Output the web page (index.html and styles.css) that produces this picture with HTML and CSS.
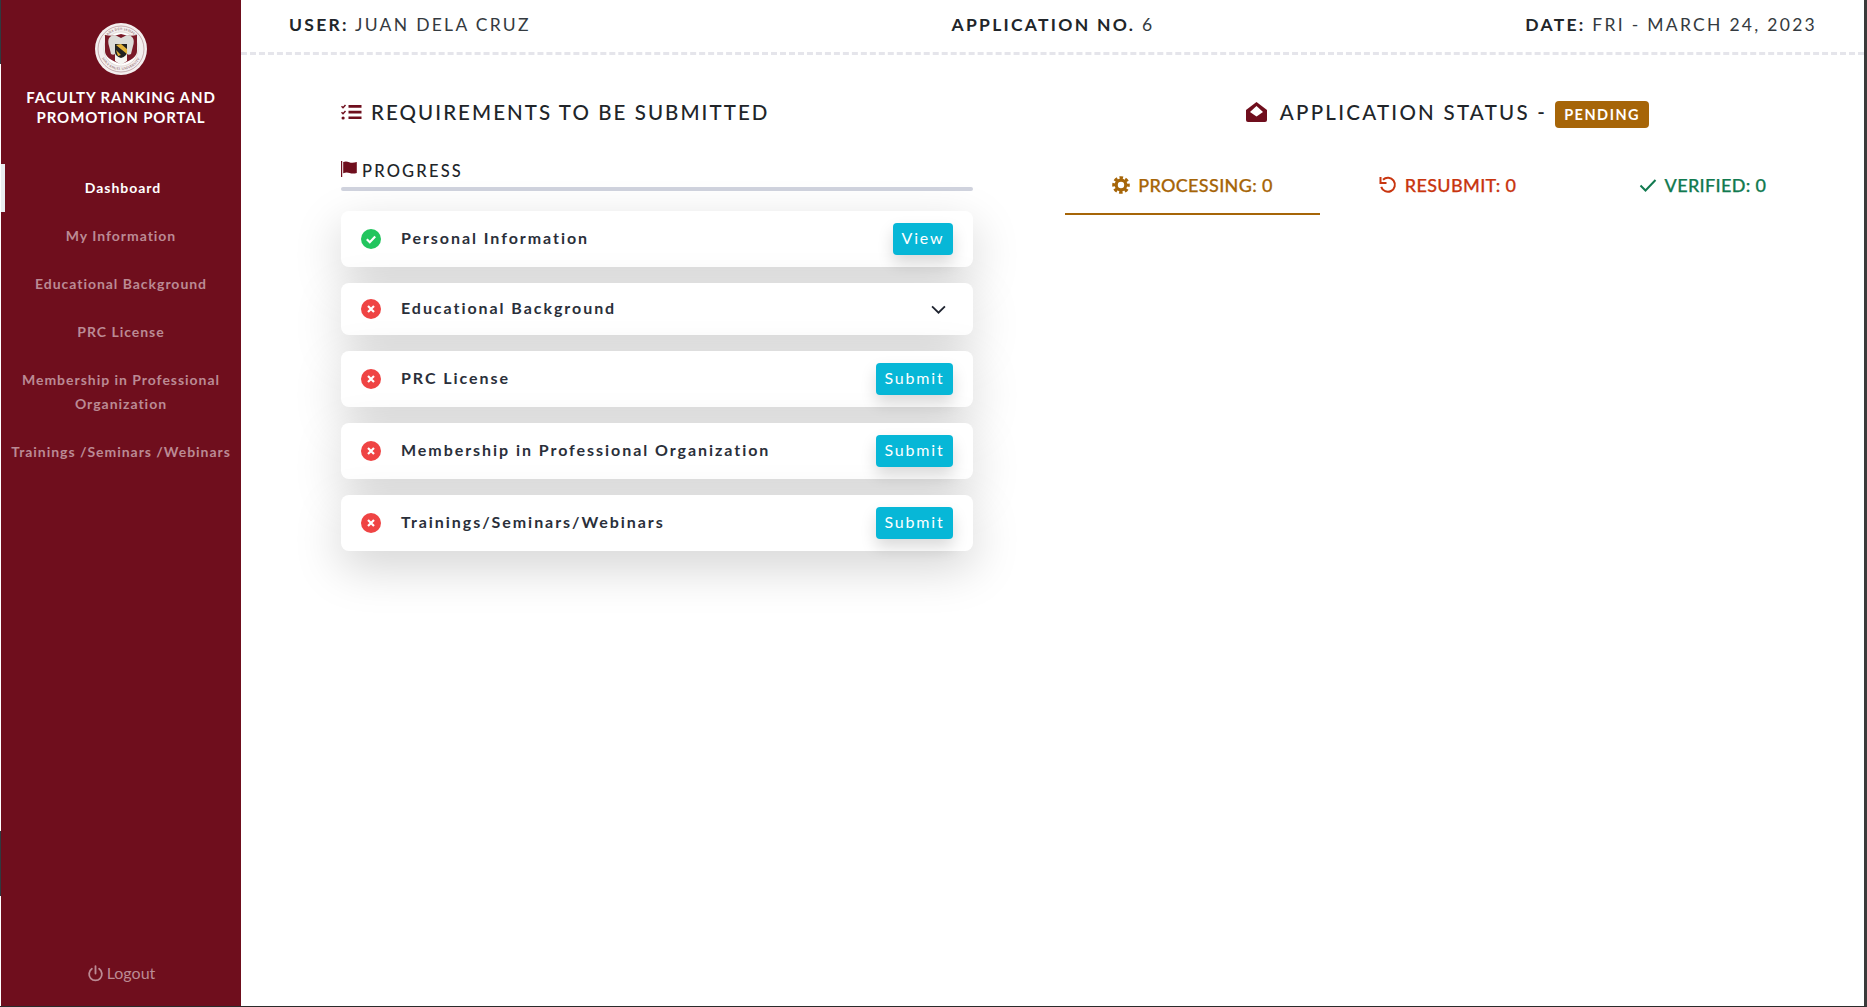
FILE: index.html
```html
<!DOCTYPE html>
<html lang="en">
<head>
<meta charset="utf-8">
<title>Faculty Ranking and Promotion Portal</title>
<link rel="stylesheet" href="styles.css">
</head>
<body>
<div class="app">
  <aside class="sidebar">
    <div class="brand">
      <svg class="crest" viewBox="0 0 52 52" aria-hidden="true">
        <defs>
          <path id="arcTop" d="M7 26a19 19 0 0 1 38 0"/>
          <path id="arcBot" d="M5 26a21 21 0 0 0 42 0"/>
        </defs>
        <circle cx="26" cy="26" r="26" fill="#f4efef"/>
        <circle cx="26" cy="26" r="23" fill="none" stroke="#9a6a70" stroke-width=".5"/>
        <circle cx="26" cy="26" r="17" fill="#fff" stroke="#a98" stroke-width=".3"/>
        <text class="crest-text"><textPath href="#arcTop" startOffset="50%" text-anchor="middle">SANA DEO SEMPER</textPath></text>
        <text class="crest-text"><textPath href="#arcBot" startOffset="50%" text-anchor="middle">HOLY ANGEL UNIVERSITY</textPath></text>
        <path d="M10 12q8 2 16 -1q8 3 16 1v16q0 8 -16 13q-16 -5 -16 -13z" fill="#7a1a28"/>
        <path d="M14 23q-3 -10 6 -11l6 3 6 -3q9 1 6 11l-2 8q-3 2 -5 -1H21q-2 3 -5 1z" fill="#dcdcd8"/>
        <path d="M20 24h12v14l-6 4 -6 -4z" fill="#f5f5f2"/>
        <path d="M20 21h12v8q0 4 -6 6q-6 -2 -6 -6z" fill="#222"/>
        <path d="M21 22l11 9v-5l-6 -5zM21 27l5 5 -3 1z" fill="#e2b33a"/>
      </svg>
      <h1 class="brand-title">FACULTY RANKING AND PROMOTION PORTAL</h1>
    </div>
    <nav class="nav">
      <a class="nav-item active">Dashboard</a>
      <a class="nav-item">My Information</a>
      <a class="nav-item">Educational Background</a>
      <a class="nav-item">PRC License</a>
      <a class="nav-item">Membership in Professional Organization</a>
      <a class="nav-item">Trainings /Seminars /Webinars</a>
    </nav>
    <a class="logout">
      <svg class="logout-icon" viewBox="0 0 16 16" aria-hidden="true"><path d="M4.6 3.6a6 6 0 1 0 6.8 0" fill="none" stroke="currentColor" stroke-width="1.7" stroke-linecap="round"/><path d="M8 1v7" fill="none" stroke="currentColor" stroke-width="1.7" stroke-linecap="round"/></svg>
      Logout
    </a>
  </aside>

  <div class="content">
    <header class="topbar">
      <div class="top-left"><b>USER:</b> JUAN DELA CRUZ</div>
      <div class="top-center"><b>APPLICATION NO.</b> 6</div>
      <div class="top-right"><b>DATE:</b> FRI - MARCH 24, 2023</div>
    </header>

    <main class="columns">
      <section class="col-left">
        <h2 class="section-title">
          <svg class="title-icon" viewBox="0.5 0 21 16" aria-hidden="true"><path d="M1 2.2l1.5 1.5L5 1M1 8.2l1.5 1.5L5 7" fill="none" stroke="#6f0e1d" stroke-width="1.5"/><circle cx="2.6" cy="14" r="1.6" fill="#6f0e1d"/><path d="M8 1h13v2.7H8zM8 6.7h13v2.7H8zM8 12.4h13v2.7H8z" fill="#6f0e1d"/></svg>
          REQUIREMENTS TO BE SUBMITTED
        </h2>
        <div class="progress-label">
          <svg class="flag-icon" viewBox="0 0 16 16" aria-hidden="true"><path d="M0 0h1.2v16H0z" fill="#6f0e1d"/><path d="M2.2 1q3 -1 6 .2t7.6 -.2v11q-4 1 -7.2 0t-6.4 .2z" fill="#6f0e1d"/></svg>
          PROGRESS
        </div>
        <div class="progress-rule"></div>
        <ul class="req-list">
          <li class="req">
            <svg class="st-icon" viewBox="0 0 20 20" aria-hidden="true"><circle cx="10" cy="10" r="10" fill="#22c55e"/><path d="M5.8 10.2l3 3 5.4 -5.6" fill="none" stroke="#fff" stroke-width="2.2"/></svg>
            <span class="req-name">Personal Information</span>
            <a class="btn btn-view">View</a>
          </li>
          <li class="req req-short">
            <svg class="st-icon" viewBox="0 0 20 20" aria-hidden="true"><circle cx="10" cy="10" r="10" fill="#ef4444"/><path d="M7 7l6 6M13 7l-6 6" fill="none" stroke="#fff" stroke-width="2.2"/></svg>
            <span class="req-name">Educational Background</span>
            <svg class="chev" viewBox="0 0 14 8" aria-hidden="true"><path d="M1 1l6 6 6 -6" fill="none" stroke="#1f2430" stroke-width="1.7"/></svg>
          </li>
          <li class="req">
            <svg class="st-icon" viewBox="0 0 20 20" aria-hidden="true"><circle cx="10" cy="10" r="10" fill="#ef4444"/><path d="M7 7l6 6M13 7l-6 6" fill="none" stroke="#fff" stroke-width="2.2"/></svg>
            <span class="req-name">PRC License</span>
            <a class="btn">Submit</a>
          </li>
          <li class="req">
            <svg class="st-icon" viewBox="0 0 20 20" aria-hidden="true"><circle cx="10" cy="10" r="10" fill="#ef4444"/><path d="M7 7l6 6M13 7l-6 6" fill="none" stroke="#fff" stroke-width="2.2"/></svg>
            <span class="req-name">Membership in Professional Organization</span>
            <a class="btn">Submit</a>
          </li>
          <li class="req">
            <svg class="st-icon" viewBox="0 0 20 20" aria-hidden="true"><circle cx="10" cy="10" r="10" fill="#ef4444"/><path d="M7 7l6 6M13 7l-6 6" fill="none" stroke="#fff" stroke-width="2.2"/></svg>
            <span class="req-name">Trainings/Seminars/Webinars</span>
            <a class="btn">Submit</a>
          </li>
        </ul>
      </section>

      <section class="col-right">
        <h2 class="section-title status-title">
          <svg class="env-icon" viewBox="0 0 21 20" aria-hidden="true"><path d="M10.5 0L21 8v10a2 2 0 0 1 -2 2H2a2 2 0 0 1 -2 -2V8z" fill="#6f0e1d"/><path d="M10.5 4l6.5 6 -6.5 4.6L4 10z" fill="#fff"/></svg>
          APPLICATION STATUS -
          <span class="badge">PENDING</span>
        </h2>
        <div class="tabs">
          <div class="tab tab-processing">
            <svg class="tab-icon" viewBox="0 0 18 18" aria-hidden="true"><circle cx="9" cy="9" r="7" fill="none" stroke="currentColor" stroke-width="3.6" stroke-dasharray="3.3 2.2" stroke-dashoffset="1.6"/><circle cx="9" cy="9" r="4.8" fill="none" stroke="currentColor" stroke-width="3.2"/></svg>
            PROCESSING: 0
          </div>
          <div class="tab tab-resubmit">
            <svg class="tab-icon" viewBox="0 0 18 18" aria-hidden="true"><path d="M4 3.7a7 7 0 1 1 -1.8 7.2" fill="none" stroke="currentColor" stroke-width="2"/><path d="M1.5 1v6h6" fill="none" stroke="currentColor" stroke-width="2"/></svg>
            RESUBMIT: 0
          </div>
          <div class="tab tab-verified">
            <svg class="tab-icon" viewBox="0 0 18 18" aria-hidden="true"><path d="M1.5 9.5l5 5L16.5 4" fill="none" stroke="currentColor" stroke-width="2"/></svg>
            VERIFIED: 0
          </div>
        </div>
      </section>
    </main>
  </div>
</div>
</body>
</html>
```

FILE: styles.css
```css
* { box-sizing: border-box; }
html, body { margin: 0; padding: 0; height: 100%; overflow: hidden; background: #fff; }
body { font-family: "Lato", "Noto Sans", sans-serif; color: #212529; }

.app {
  display: flex;
  height: 1007px;
  padding-left: 1px;
  border-right: 3px solid #3a3a3a;
  border-bottom: 1px solid #2b2b2b;
  background-image: linear-gradient(#2f3a40, #2f3a40), linear-gradient(#2f3a40, #2f3a40);
  background-repeat: no-repeat;
  background-size: 1px 64px, 1px 65px;
  background-position: 0 0, 0 831px;
}

/* Sidebar */
.sidebar {
  width: 240px;
  flex: none;
  background: #6f0e1d;
  display: flex;
  flex-direction: column;
  align-items: stretch;
}
.brand { padding-top: 23px; display: flex; flex-direction: column; align-items: center; }
.crest { width: 52px; height: 52px; display: block; }
.crest-text { font-family: "Liberation Serif", serif; font-size: 3.4px; fill: #6f3a40; letter-spacing: .2px; }
.brand-title {
  margin: 12px 0 0;
  padding: 0 20px;
  color: #fff;
  font-size: 15px;
  font-weight: 700;
  line-height: 20px;
  letter-spacing: .9px;
  text-align: center;
}
.nav { margin-top: 37px; display: flex; flex-direction: column; }
.nav-item {
  display: block;
  padding: 12px 8px;
  color: #bb8a94;
  font-size: 14px;
  font-weight: 700;
  line-height: 24px;
  letter-spacing: .97px;
  text-align: center;
}
.nav-item.active { color: #fff; border-left: 4px solid #e9ecef; }
.logout {
  margin-top: auto;
  margin-bottom: 21px;
  display: flex;
  align-items: center;
  justify-content: center;
  gap: 3px;
  color: #bb8a94;
  font-size: 16px;
  line-height: 24px;
}
.logout-icon { width: 17px; height: 17px; }

/* Main */
.content { flex: 1; min-width: 0; display: flex; flex-direction: column; }
.topbar {
  height: 55px;
  padding: 0 47px 3px 48px;
  display: grid;
  grid-template-columns: 1fr 1fr 1fr;
  align-items: center;
  border-bottom: 3px dashed #e5e5eb;
  font-size: 17.5px;
  letter-spacing: 2.28px;
  color: #343a40;
}
.topbar b { color: #212529; font-weight: 700; }
.top-center { text-align: center; }
.top-right { text-align: right; }

.columns { padding: 43px 34px 0 100px; display: flex; gap: 92px; }
.col-left { width: 632px; flex: none; }
.col-right { flex: 1; min-width: 0; }

.section-title {
  margin: 0;
  height: 28px;
  display: flex;
  align-items: center;
  gap: 9px;
  font-size: 20.5px;
  font-weight: 500;
  letter-spacing: 2.06px;
  color: #212529;
  white-space: nowrap;
}
.title-icon { width: 21px; height: 16px; flex: none; }
.progress-label {
  margin-top: 33px;
  height: 24px;
  display: flex;
  align-items: center;
  gap: 5px;
  font-size: 16.5px;
  font-weight: 500;
  letter-spacing: 2.2px;
  color: #212529;
}
.flag-icon { width: 16px; height: 16px; margin-top: -4px; flex: none; }
.progress-rule { margin-top: 4px; height: 4px; background: #d0d3de; border-radius: 2px; }

.req-list { list-style: none; margin: 20px 0 0; padding: 0; display: flex; flex-direction: column; gap: 16px; }
.req {
  height: 56px;
  padding: 0 20px;
  display: flex;
  align-items: center;
  background: #fff;
  border-radius: 8px;
  box-shadow: 0 16px 48px rgba(0, 0, 0, .175);
}
.req-short { height: 52px; }
.st-icon { width: 20px; height: 20px; flex: none; }
.req-name {
  margin-left: 20px;
  padding-bottom: 3px;
  font-size: 16px;
  font-weight: 700;
  letter-spacing: 1.95px;
  color: #2a2f3a;
}
.btn {
  margin-left: auto;
  width: 77px;
  height: 32px;
  padding-bottom: 3px;
  display: flex;
  align-items: center;
  justify-content: center;
  background: #07b7d7;
  color: #fff;
  border-radius: 4px;
  font-size: 16px;
  letter-spacing: 1.8px;
  box-shadow: 0 8px 16px rgba(0, 0, 0, .15);
}
.btn-view { width: 60px; }
.chev { margin-left: auto; margin-right: 7px; width: 15px; height: 9px; flex: none; }

.status-title { justify-content: center; gap: 0; letter-spacing: 2.25px; }
.env-icon { width: 21px; height: 20px; margin-right: 13px; flex: none; }
.badge {
  margin-left: 8px;
  margin-top: 5px;
  padding: 0 9px;
  height: 27px;
  display: flex;
  align-items: center;
  background: #a66508;
  color: #fff;
  border-radius: 4px;
  font-size: 14.5px;
  font-weight: 700;
  letter-spacing: 1.5px;
}
.tabs { margin-top: 39px; display: grid; grid-template-columns: repeat(3, 255px); }
.tab {
  height: 50px;
  padding-bottom: 9px;
  display: flex;
  align-items: center;
  justify-content: center;
  gap: 8px;
  font-size: 18px;
  font-weight: 500;
  letter-spacing: .35px;
  border-bottom: 2px solid transparent;
  -webkit-text-stroke: .25px currentColor;
}
.tab-icon { width: 18px; height: 18px; flex: none; }
.tab-processing { color: #a66508; border-bottom-color: #a66508; }
.tab-resubmit { color: #c8350f; }
.tab-verified { color: #127a50; }
```
